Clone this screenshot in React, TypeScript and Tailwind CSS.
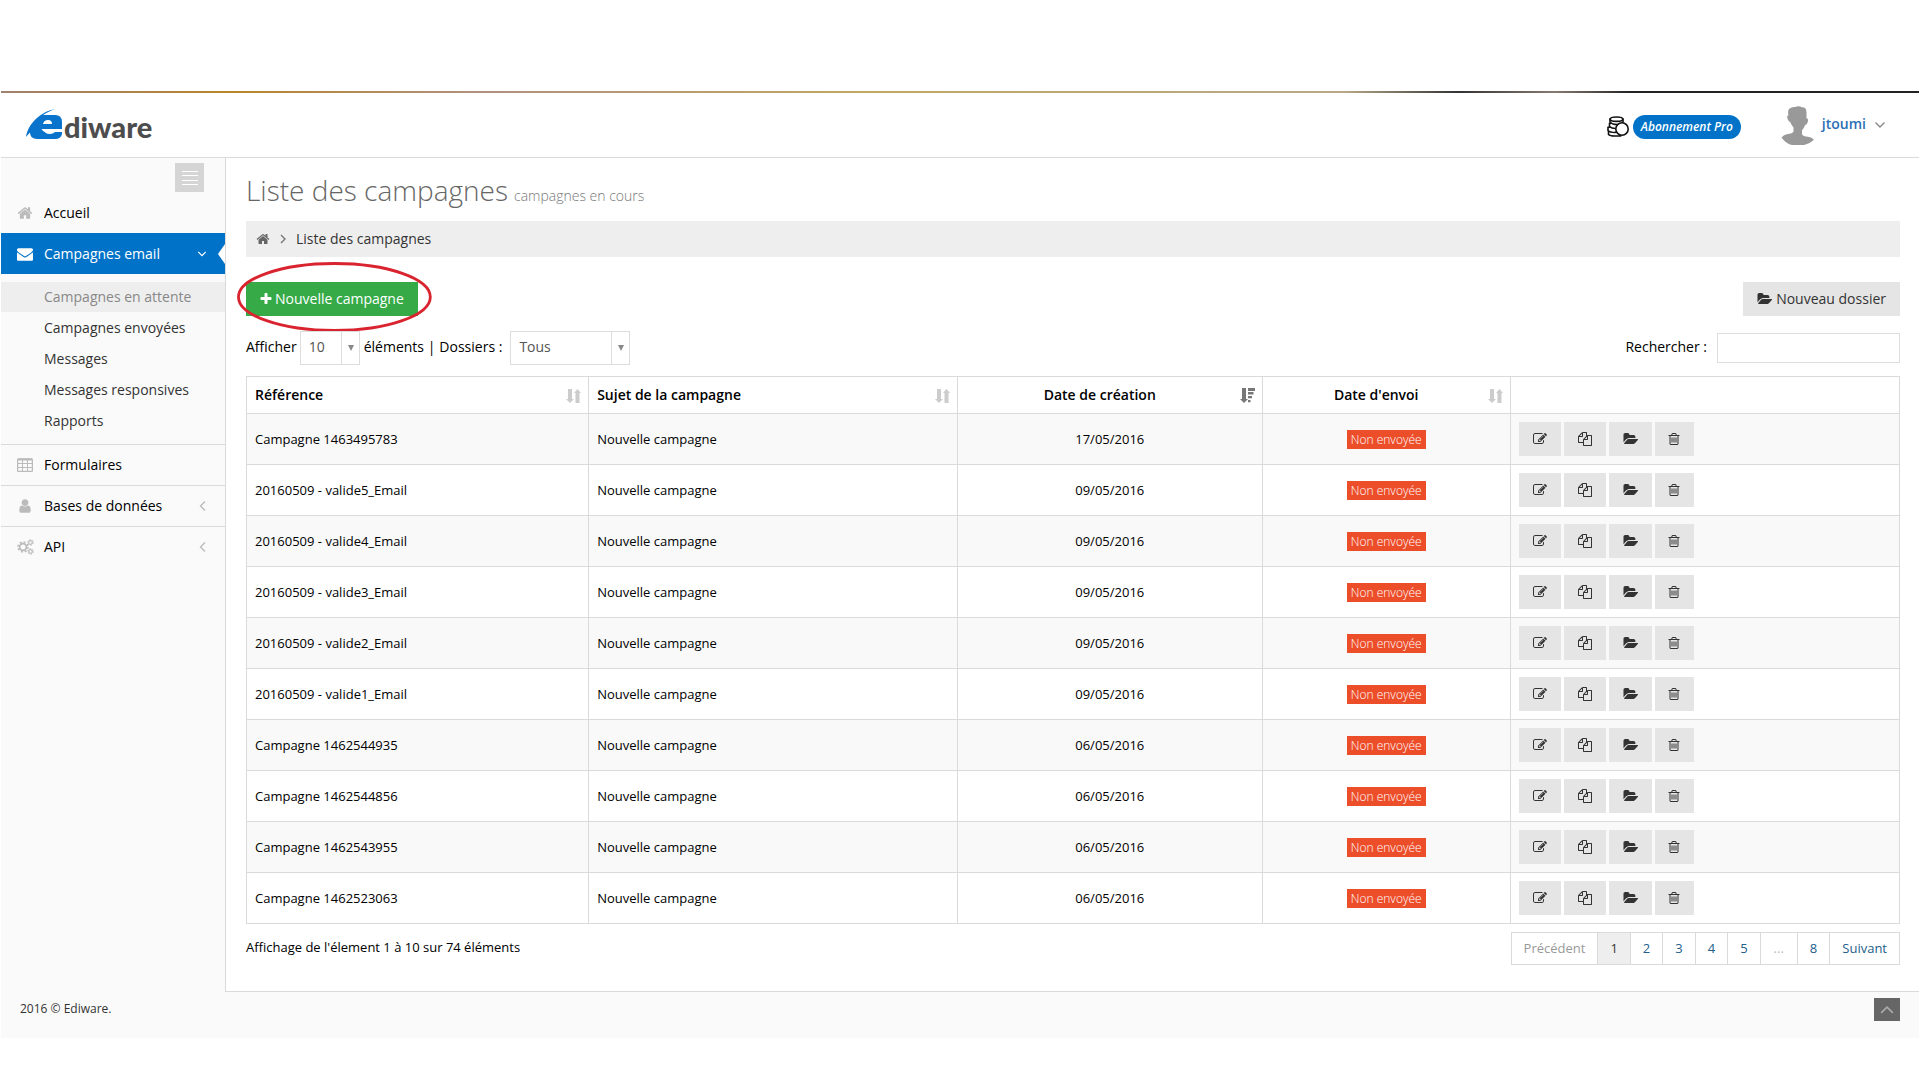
import { useState } from "react";
import type { ReactNode } from "react";

const icons = {
  home: "M1472 992v480q0 26-19 45t-45 19h-384v-384h-256v384h-384q-26 0-45-19t-19-45v-480q0-1 .5-3t.5-3l575-474 575 474q1 2 1 6zm223-69l-62 74q-8 9-21 11h-3q-13 0-21-7l-692-577-692 577q-12 8-24 7-13-2-21-11l-62-74q-8-10-7-23.5t11-21.5l719-599q32-26 76-26t76 26l244 204v-195q0-14 9-23t23-9h192q14 0 23 9t9 23v408l219 182q10 8 11 21.5t-7 23.5z",
  envelope:
    "M1792 710v794q0 66-47 113t-113 47h-1472q-66 0-113-47t-47-113v-794q44 49 101 87 362 246 497 345 57 42 92.5 65.5t94.5 48 110 24.5h2q51 0 110-24.5t94.5-48 92.5-65.5q170-123 498-345 57-39 100-87zm0-294q0 79-49 151t-122 123q-376 261-468 325-10 7-42.5 31t-54 38.5-52 32.5-57.5 27-50 9h-2q-23 0-50-9t-57.5-27-52-32.5-54-38.5-42.5-31q-91-64-262-182.5t-205-142.5q-62-42-117-115.5t-55-136.5q0-78 41.5-130t118.5-52h1472q65 0 112.5 47t47.5 113z",
  user: "M1536 1399q0 109-62.5 187t-150.5 78h-854q-88 0-150.5-78t-62.5-187q0-85 8.5-160.5t31.5-152 58.5-131 94-89 134.5-34.5q131 128 313 128t313-128q76 0 134.5 34.5t94 89 58.5 131 31.5 152 8.5 160.5zm-256-887q0 159-112.5 271.5t-271.5 112.5-271.5-112.5-112.5-271.5 112.5-271.5 271.5-112.5 271.5 112.5 112.5 271.5z",
  plus: "M1600 736v192q0 40-28 68t-68 28h-416v416q0 40-28 68t-68 28h-192q-40 0-68-28t-28-68v-416h-416q-40 0-68-28t-28-68v-192q0-40 28-68t68-28h416v-416q0-40 28-68t68-28h192q40 0 68 28t28 68v416h416q40 0 68 28t28 68z",
  edit: "M888 1184l116-116-152-152-116 116v56h96v96h56zm440-720q-16-16-33 1l-350 350q-17 17-1 33t33-1l350-350q17-17 1-33zm80 594v190q0 119-84.5 203.5t-203.5 84.5h-832q-119 0-203.5-84.5t-84.5-203.5v-832q0-119 84.5-203.5t203.5-84.5h832q63 0 117 25 15 7 18 23 3 17-9 29l-49 49q-14 14-32 8-23-6-45-6h-832q-66 0-113 47t-47 113v832q0 66 47 113t113 47h832q66 0 113-47t47-113v-126q0-13 9-22l64-64q15-15 35-7t20 29zm-96-738l288 288-672 672h-288v-288zm444 132l-92 92-288-288 92-92q28-28 68-28t68 28l152 152q28 28 28 68t-28 68z",
  copy: "M1696 384q40 0 68 28t28 68v1216q0 40-28 68t-68 28h-960q-40 0-68-28t-28-68v-288h-544q-40 0-68-28t-28-68v-672q0-40 20-88t48-76l408-408q28-28 76-48t88-20h416q40 0 68 28t28 68v328q68-40 128-40h416zm-544 213l-299 299h299v-299zm-640-384l-299 299h299v-299zm196 647l316-316v-416h-384v416q0 40-28 68t-68 28h-416v640h512v-256q0-40 20-88t48-76zm956 804v-1152h-384v416q0 40-28 68t-68 28h-416v640h896z",
  folder:
    "M1943 952q0 31-31 66l-336 396q-43 51-120.5 86.5t-143.5 35.5h-1088q-34 0-60.5-13t-26.5-43q0-31 31-66l336-396q43-51 120.5-86.5t143.5-35.5h1088q34 0 60.5 13t26.5 43zm-343-344v160h-832q-94 0-197 47.5t-164 119.5l-337 396-5 6q0-4-.5-12.5t-.5-12.5v-960q0-92 66-158t158-66h320q92 0 158 66t66 158v32h544q92 0 158 66t66 158z",
  trash:
    "M704 736v576q0 14-9 23t-23 9h-64q-14 0-23-9t-9-23v-576q0-14 9-23t23-9h64q14 0 23 9t9 23zm256 0v576q0 14-9 23t-23 9h-64q-14 0-23-9t-9-23v-576q0-14 9-23t23-9h64q14 0 23 9t9 23zm256 0v576q0 14-9 23t-23 9h-64q-14 0-23-9t-9-23v-576q0-14 9-23t23-9h64q14 0 23 9t9 23zm128 724v-948h-896v948q0 22 7 40.5t14.5 27 10.5 8.5h832q3 0 10.5-8.5t14.5-27 7-40.5zm-672-1076h448l-48-117q-7-9-17-11h-317q-10 2-17 11zm928 32v64q0 14-9 23t-23 9h-96v948q0 83-47 143.5t-113 60.5h-832q-66 0-113-58.5t-47-141.5v-952h-96q-14 0-23-9t-9-23v-64q0-14 9-23t23-9h309l70-167q15-37 54-63t79-26h320q40 0 79 26t54 63l70 167h309q14 0 23 9t9 23z",
};

function Icon({ name, className }: { name: keyof typeof icons; className?: string }) {
  return (
    <svg viewBox={name === "folder" ? "0 0 1943 1792" : "0 0 1792 1792"} fill="currentColor" className={className}>
      <path d={icons[name]} />
    </svg>
  );
}

function Chevron({ d, className }: { d: string; className?: string }) {
  return (
    <svg viewBox="0 0 12 12" fill="none" stroke="currentColor" strokeWidth="1.4" className={className}>
      <path d={d} />
    </svg>
  );
}

const DOWN = "M1.5 3.5 6 8l4.5-4.5";
const LEFT = "M8 1.5 3.5 6 8 10.5";
const RIGHT = "M4 2l4 4-4 4";
const UP = "M1 8.5 6 3.5 11 8.5";

function TableIcon() {
  return (
    <svg viewBox="0 0 16 14" fill="none" stroke="currentColor" className="w-4 h-[14px]">
      <rect x="0.6" y="1" width="14.8" height="12.4" rx="1" strokeWidth="1.3" />
      <path d="M1 1.5h14" strokeWidth="2" />
      <path d="M1 5.5h14M1 9.5h14M5.5 2v11M10.5 2v11" />
    </svg>
  );
}

function CogsIcon() {
  return (
    <svg viewBox="0 0 17 16" fill="none" stroke="currentColor" className="w-[17px] h-4">
      <circle cx="6" cy="8" r="3.4" strokeWidth="1.8" />
      <circle cx="6" cy="8" r="5" strokeWidth="1.6" strokeDasharray="1.96 1.96" />
      <circle cx="13.5" cy="3.5" r="1.8" strokeWidth="1.2" />
      <circle cx="13.5" cy="3.5" r="2.8" strokeDasharray="1.46 1.46" />
      <circle cx="13.5" cy="12.5" r="1.8" strokeWidth="1.2" />
      <circle cx="13.5" cy="12.5" r="2.8" strokeDasharray="1.46 1.46" />
    </svg>
  );
}

function SortIcon({ active }: { active?: boolean }) {
  if (active) {
    return (
      <svg viewBox="0 0 15 15" fill="#777" className="w-[15px] h-[15px] shrink-0">
        <path d="M2 0h4v11h2L4 15 0 11h2zM8 0h7v3H8zM8 4h5.500v2.500H8zM8 8h4v2.300H8zM8 12h2.500v2.300H8z" />
      </svg>
    );
  }
  return (
    <svg viewBox="0 0 15 15" fill="#ccc" className="w-[15px] h-[15px] shrink-0">
      <path d="M2 1h4v10h2L4 15 0 11h2zM9.500 15h4V5H15l-3.500-4L8 5h1.500z" />
    </svg>
  );
}

function Logo() {
  return (
    <a href="#" className="flex h-8 items-end" aria-label="Ediware">
      <svg viewBox="0 0 38 32" className="w-[38px] h-8 shrink-0">
        <path
          fill="#0a73cb"
          d="M0 28C2 15 14 3 29 0 24 2 20 4 17 6h12q7 0 7 7v7H18q0 5 6 5 3 0 5-2h7v2q-1 5-7 5H11Q4 30 4 23.5 1.5 26 0 28z"
        />
        <path fill="#fff" d="M17 15q1-4 5-4t4 4zM15.5 20H36v2.2H26q-2 1.8-5 1.3-4-.5-5.5-3.5z" />
      </svg>
      <span className="font-['Lato'] text-[29px] leading-7 font-black text-[#4d4d4d]">diware</span>
    </a>
  );
}

function Coins() {
  return (
    <svg viewBox="0 0 22 21" fill="#fff" stroke="#111" strokeWidth="1.6" className="w-[22px] h-[21px]">
      <path d="M1.500 15.500v3q1.500 1.500 6 1.500h6l-1-6z" />
      <path d="M1 11.500v3q2 2 7 2l4-1V9z" />
      <path d="M2.500 7.500v3q2 2 6 2l5-2V6z" />
      <path d="M3 3v3q2 2.500 7 2.500t6-2.500V3z" />
      <ellipse cx="9.5" cy="3.2" rx="6.3" ry="2.2" />
      <circle cx="15" cy="13" r="6.2" />
    </svg>
  );
}

function Avatar() {
  return (
    <svg viewBox="0 0 33 39" fill="#999" className="w-[33px] h-[39px]">
      <path d="M8 3Q11 .5 14 1q4-1.500 7 .300 4.500 0 4.500 5v6q2 0 1.500 3t-3 4q-1 3-3 5v4q1 2 6 2.500 4 .500 6 3-6 5.900-16.500 5.900T.5 31.500q2-3 6-3.500 5-.500 6-2.500v-4q-2-2-3-5-2-.500-3-4t1-3Q6.500 5 8 3z" />
    </svg>
  );
}

const submenu = ["Campagnes en attente", "Campagnes envoyées", "Messages", "Messages responsives", "Rapports"];

function NavLink({ icon, label, collapsed }: { icon: ReactNode; label: string; collapsed?: boolean }) {
  return (
    <a href="#" className="flex h-10 items-center text-black">
      <span className="flex w-[43px] pl-4 text-[#bbb]">{icon}</span>
      {label}
      {collapsed && <Chevron d={LEFT} className="ml-auto mr-4 w-3 h-3 text-[#bbb]" />}
    </a>
  );
}

function Sidebar() {
  return (
    <nav className="w-[225px] shrink-0 border-r border-[#dadada] pt-[5px] text-sm">
      <div className="flex justify-end pr-[21px] pb-px">
        <button type="button" aria-label="Menu" className="flex h-[29px] w-[29px] items-center justify-center bg-[#d5d5d5]">
          <svg viewBox="0 0 16 14" stroke="#fff" className="w-4 h-[14px]">
            <path d="M0 .5h16M0 4.5h16M0 9.5h16M0 13.5h16" />
          </svg>
        </button>
      </div>
      <NavLink icon={<Icon name="home" className="w-4 h-4" />} label="Accueil" />
      <a href="#" className="relative flex h-[41px] items-center bg-[#0073c8] text-white">
        <span className="flex w-[43px] pl-4">
          <Icon name="envelope" className="w-4 h-4" />
        </span>
        Campagnes email
        <Chevron d={DOWN} className="ml-auto mr-[18px] w-[10px] h-[10px]" />
        <svg viewBox="0 0 7 20" fill="#fff" className="absolute right-0 w-[7px] h-5">
          <path d="M7 0v20L0 10z" />
        </svg>
      </a>
      <ul className="flex flex-col gap-px py-2">
        {submenu.map((label, i) => (
          <li key={label}>
            <a
              href="#"
              className={i === 0 ? "flex h-[30px] items-center bg-[#eee] pl-[43px] text-[#888]" : "flex h-[30px] items-center pl-[43px] text-[#333]"}
            >
              {label}
            </a>
          </li>
        ))}
      </ul>
      <ul>
        <li className="border-t border-[#dadada]">
          <NavLink icon={<TableIcon />} label="Formulaires" />
        </li>
        <li className="border-t border-[#dadada]">
          <NavLink icon={<Icon name="user" className="w-4 h-4" />} label="Bases de données" collapsed />
        </li>
        <li className="border-t border-[#dadada]">
          <NavLink icon={<CogsIcon />} label="API" collapsed />
        </li>
      </ul>
    </nav>
  );
}

function Header() {
  return (
    <header className="flex h-[65px] items-center justify-between border-b border-[#dadada] pl-[25px] pr-[33px]">
      <Logo />
      <div className="flex items-center">
        <div className="flex items-center pt-[3px]">
          <Coins />
          <span className="ml-1 flex h-6 items-center rounded-full bg-[#0073c8] px-2 text-xs font-semibold text-white italic">
            Abonnement Pro
          </span>
        </div>
        <button type="button" className="ml-10 flex items-center text-sm font-semibold text-[#2a6fb5]">
          <Avatar />
          <span className="ml-2 pb-[2px]">jtoumi</span>
          <Chevron d={DOWN} className="ml-2 w-3 h-3 text-[#888]" />
        </button>
      </div>
    </header>
  );
}

function Select({ id, className, options }: { id: string; className: string; options: string[] }) {
  return (
    <span className="relative flex">
      <select id={id} className={`${className} h-[34px] appearance-none border border-[#ddd] bg-white pb-[2px] pl-2 text-[#555]`}>
        {options.map((option) => (
          <option key={option}>{option}</option>
        ))}
      </select>
      <span className="pointer-events-none absolute inset-y-0 right-0 flex w-[19px] items-center justify-center border-l border-[#ddd]">
        <svg viewBox="0 0 6 6" fill="#888" className="w-[6px] h-[6px]">
          <path d="M0 0h6L3 6z" />
        </svg>
      </span>
    </span>
  );
}

const campaigns = [
  { name: "Campagne 1463495783", date: "17/05/2016" },
  { name: "20160509 - valide5_Email", date: "09/05/2016" },
  { name: "20160509 - valide4_Email", date: "09/05/2016" },
  { name: "20160509 - valide3_Email", date: "09/05/2016" },
  { name: "20160509 - valide2_Email", date: "09/05/2016" },
  { name: "20160509 - valide1_Email", date: "09/05/2016" },
  { name: "Campagne 1462544935", date: "06/05/2016" },
  { name: "Campagne 1462544856", date: "06/05/2016" },
  { name: "Campagne 1462543955", date: "06/05/2016" },
  { name: "Campagne 1462523063", date: "06/05/2016" },
];

const columns = [
  { label: "Référence", width: "w-[20.7%]" },
  { label: "Sujet de la campagne", width: "w-[22.3%]" },
  { label: "Date de création", width: "w-[18.45%]", center: true, active: true },
  { label: "Date d'envoi", width: "w-[15%]", center: true },
];

const cell = "border border-[#dadada] px-2 pt-[2px]";
const rowButton = "flex h-[34px] items-center justify-center bg-[#e5e5e5] text-[#333]";

function CampaignTable() {
  return (
    <table className="w-full table-fixed border-collapse border border-[#dadada] text-[13px]">
      <thead>
        <tr className="h-[37px]">
          {columns.map((col) => (
            <th key={col.label} className={`${col.width} border border-[#dadada] pl-2 pr-[7px] text-sm font-semibold`}>
              <div className="flex items-center">
                <span className={col.center ? "flex-1 pr-[6px] text-center" : "flex-1 text-left"}>{col.label}</span>
                <SortIcon active={col.active} />
              </div>
            </th>
          ))}
          <th className="border border-[#dadada]" aria-label="Actions"></th>
        </tr>
      </thead>
      <tbody>
        {campaigns.map((row) => (
          <tr key={row.name} className="h-[51px] odd:bg-[#f9f9f9]">
            <td className={cell}>{row.name}</td>
            <td className={cell}>Nouvelle campagne</td>
            <td className={`${cell} text-center`}>{row.date}</td>
            <td className={`${cell} text-center`}>
              <span className="inline-block bg-[#ed4e2a] px-1 text-xs leading-[19px] font-light text-white">Non envoyée</span>
            </td>
            <td className="border border-[#dadada] px-2">
              <div className="flex gap-[3px]">
                <button type="button" aria-label="Modifier" className={`${rowButton} w-[42px]`}>
                  <Icon name="edit" className="w-[14px] h-[14px]" />
                </button>
                <button type="button" aria-label="Dupliquer" className={`${rowButton} w-[42px]`}>
                  <Icon name="copy" className="w-[14px] h-[14px]" />
                </button>
                <button type="button" aria-label="Déplacer" className={`${rowButton} w-[43px]`}>
                  <Icon name="folder" className="w-[15px] h-[14px]" />
                </button>
                <button type="button" aria-label="Supprimer" className={`${rowButton} w-[39px]`}>
                  <Icon name="trash" className="w-[14px] h-[14px]" />
                </button>
              </div>
            </td>
          </tr>
        ))}
      </tbody>
    </table>
  );
}

function Pagination() {
  const [page, setPage] = useState("1");

  return (
    <div className="flex h-[33px] divide-x divide-[#dadada] border border-[#dadada] text-[13px] text-[#23608c]">
      <button type="button" disabled className="px-3 text-[#999]">
        Précédent
      </button>
      {["1", "2", "3", "4", "5"].map((n) => (
        <button
          key={n}
          type="button"
          onClick={() => setPage(n)}
          className={n === page ? "bg-[#eee] px-3 text-[#333]" : "px-3"}
        >
          {n}
        </button>
      ))}
      <span className="flex items-center px-[13px] text-[#bbb]">...</span>
      <button type="button" className="px-3">
        8
      </button>
      <button type="button" className="px-3">
        Suivant
      </button>
    </div>
  );
}

export default function App() {
  return (
    <div className="min-h-screen bg-white px-px pt-[91px] font-['Open_Sans',sans-serif] text-black">
      <div className="h-[2px] bg-[linear-gradient(90deg,#a08070,#b8862a_12%,#b09080_25%,#c0a860_45%,#b8a888_70%,#333_76%,#8a7a70_81%,#222_85%,#222)]" />
      <Header />

      <div className="flex bg-[#fafafa]">
        <Sidebar />

        <main className="min-w-0 flex-1 border-b border-[#dadada] bg-white pr-[19px] pb-[26px] pl-5">
          {/* Title */}
          <h1 className="flex items-baseline gap-[6px] pt-[10px] text-[28px] leading-[45px] font-light text-[#666]">
            Liste des campagnes
            <small className="text-sm font-light text-[#777]">campagnes en cours</small>
          </h1>

          <div className="mt-2 flex h-9 items-center bg-[#eee] pl-[10px] text-sm text-[#333]">
            <a href="#" aria-label="Accueil" className="text-[#666]">
              <Icon name="home" className="w-[14px] h-[14px]" />
            </a>
            <Chevron d={RIGHT} className="mx-[7px] w-3 h-3 text-[#777]" />
            Liste des campagnes
          </div>

          {/* Actions */}
          <div className="mt-[25px] flex justify-between text-sm">
            <div className="relative">
              <button type="button" className="flex h-[34px] items-center gap-[2px] bg-[#35aa47] pr-[14px] pl-[13px] text-white">
                <Icon name="plus" className="w-[14px] h-[14px]" />
                Nouvelle campagne
              </button>
              <div className="pointer-events-none absolute -top-5 -right-[14px] -left-[9px] h-[70px]">
                <svg viewBox="0 0 195 70" preserveAspectRatio="none" fill="none" className="w-full h-full">
                  <ellipse cx="97.5" cy="35" rx="96" ry="33.500" stroke="#d9232e" strokeWidth="2.8" />
                </svg>
              </div>
            </div>
            <button type="button" className="flex h-[34px] items-center gap-1 bg-[#e5e5e5] px-[14px] text-[#333]">
              <Icon name="folder" className="w-[15px] h-[14px]" />
              Nouveau dossier
            </button>
          </div>

          {/* Filters */}
          <div className="mt-[15px] mb-[11px] flex items-center justify-between text-sm">
            <div className="flex items-center">
              <label htmlFor="length" className="mr-[3px] pb-[2px]">
                Afficher
              </label>
              <Select id="length" className="w-[60px]" options={["10", "25", "50", "100"]} />
              <span className="ml-1 pb-[2px]">éléments |</span>
              <label htmlFor="folders" className="mr-2 ml-1 pb-[2px]">
                Dossiers :
              </label>
              <Select id="folders" className="w-[120px]" options={["Tous"]} />
            </div>
            <div className="flex items-center gap-[10px]">
              <label htmlFor="search" className="pb-[2px]">
                Rechercher :
              </label>
              <input id="search" type="text" className="h-[30px] w-[183px] border border-[#ddd] px-2" />
            </div>
          </div>

          <CampaignTable />

          <div className="mt-2 flex items-start justify-between">
            <p className="pt-[5px] text-[13px] leading-5">Affichage de l'élement 1 à 10 sur 74 éléments</p>
            <Pagination />
          </div>
        </main>
      </div>

      <footer className="flex h-[46px] items-start justify-between bg-[#fafafa] pt-[6px] pr-[19px] pl-[19px] text-xs text-[#333]">
        <span className="leading-[22px]">2016 © Ediware.</span>
        <a href="#" aria-label="Haut de page" className="flex h-[23px] w-[26px] items-center justify-center bg-[#666] text-[#aaa]">
          <Chevron d={UP} className="w-[14px] h-[14px]" />
        </a>
      </footer>
    </div>
  );
}
